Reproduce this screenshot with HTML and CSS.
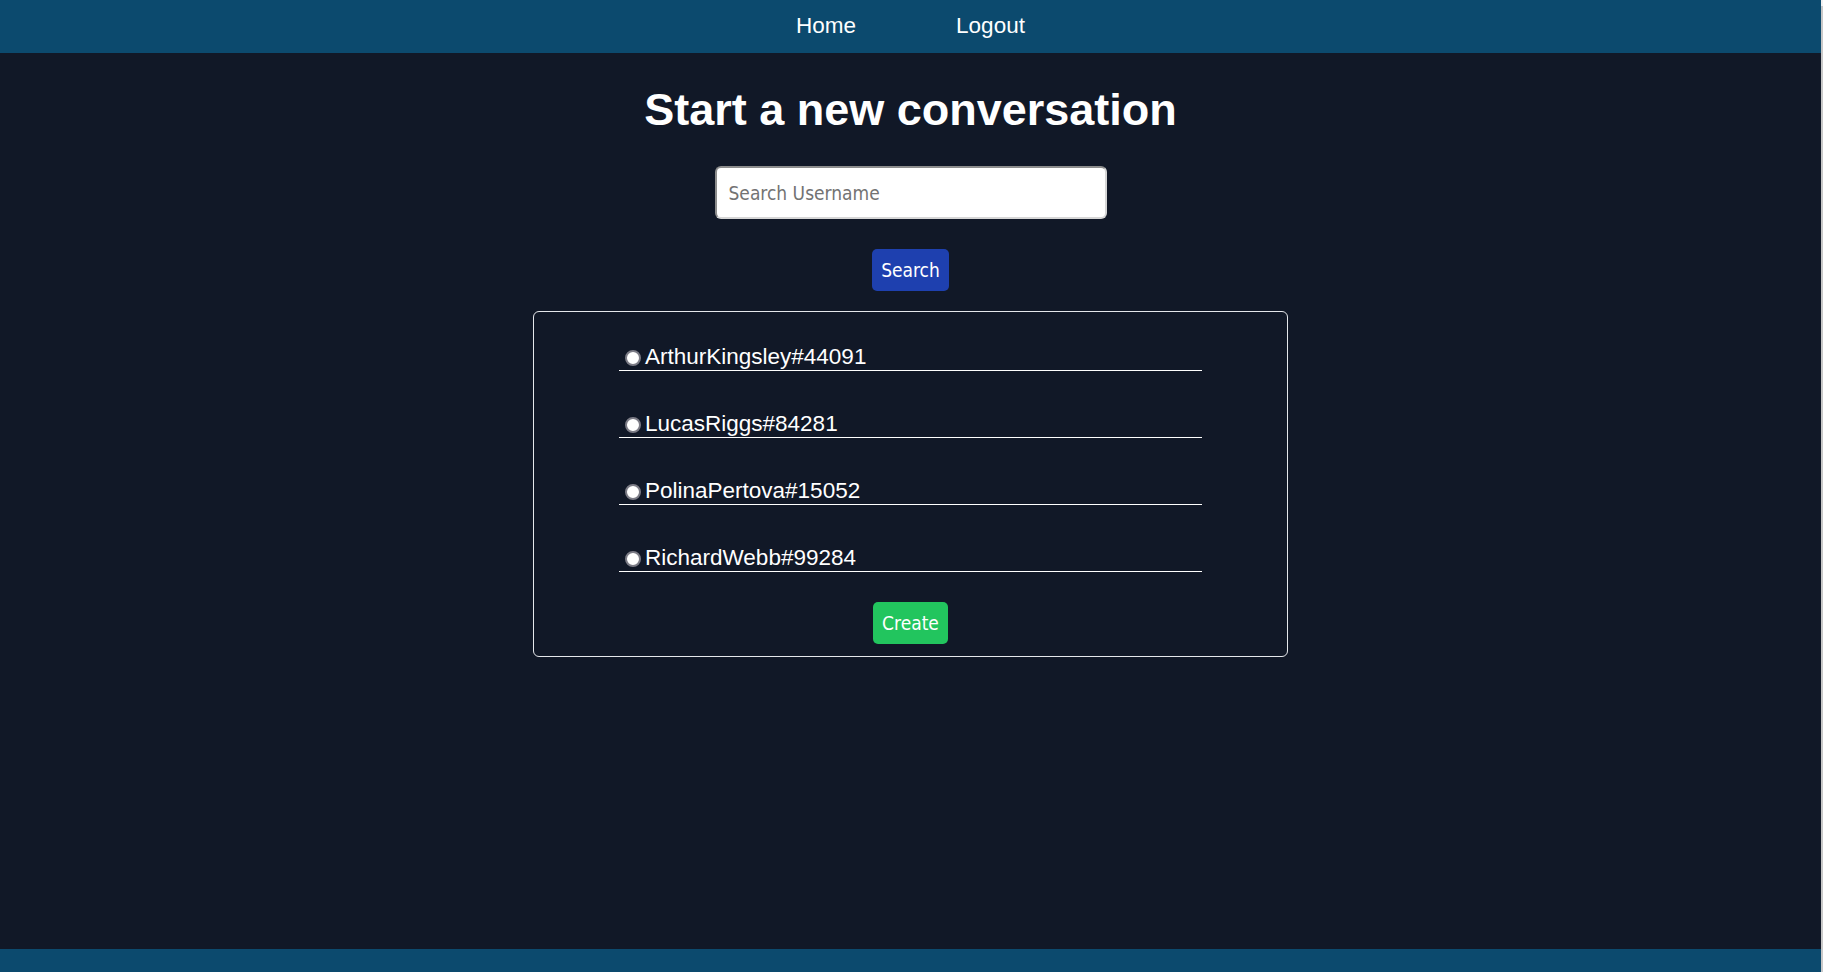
FILE: index.html
```html
<!DOCTYPE html>
<html lang="en">
<head>
<meta charset="utf-8">
<title>Start a new conversation</title>
<link rel="stylesheet" href="styles.css">
</head>
<body>
<div class="page">
  <header class="topbar">
    <nav class="nav">
      <a class="nav-link" href="#">Home</a>
      <a class="nav-link" href="#">Logout</a>
    </nav>
  </header>
  <main class="main">
    <h1 class="title">Start a new conversation</h1>
    <form class="search-form">
      <input class="search-input" type="text" placeholder="Search Username">
      <button class="btn btn-search" type="button">Search</button>
    </form>
    <form class="card">
      <label class="user-row"><input class="radio" type="radio" name="user">ArthurKingsley#44091</label>
      <label class="user-row"><input class="radio" type="radio" name="user">LucasRiggs#84281</label>
      <label class="user-row"><input class="radio" type="radio" name="user">PolinaPertova#15052</label>
      <label class="user-row"><input class="radio" type="radio" name="user">RichardWebb#99284</label>
      <button class="btn btn-create" type="button">Create</button>
    </form>
  </main>
  <footer class="footer"></footer>
</div>
<div class="scroll-strip"><div class="scroll-cap"></div></div>
</body>
</html>
```

FILE: styles.css
```css
* { box-sizing: border-box; }

html, body {
  margin: 0;
  height: 100%;
}

body {
  display: flex;
  background: #111827;
  color: #ffffff;
  font-family: "Liberation Sans", Arial, sans-serif;
}

.page {
  flex: 1;
  display: flex;
  flex-direction: column;
  min-height: 100vh;
}

.scroll-strip {
  width: 2px;
  background: #c9c9c9;
}

.scroll-cap {
  height: 6px;
  background: #f1f1f1;
}

.topbar {
  height: 53px;
  background: #0c4a6e;
  display: flex;
  align-items: center;
  justify-content: center;
  padding-bottom: 2px;
}

.nav {
  display: flex;
  gap: 100px;
}

.nav-link {
  color: #ffffff;
  text-decoration: none;
  font-size: 22.5px;
  line-height: 26px;
}

.main {
  flex: 1;
  display: flex;
  flex-direction: column;
  align-items: center;
  padding-top: 32px;
}

.title {
  margin: 0;
  font-size: 45px;
  line-height: 50px;
  font-weight: 700;
  text-align: center;
}

.search-form {
  display: flex;
  flex-direction: column;
  align-items: center;
  margin-top: 31px;
}

.search-input {
  width: 392px;
  height: 53px;
  border: 2px solid;
  border-color: #8d8d8d #d6d6d6 #d6d6d6 #8d8d8d;
  border-radius: 6px;
  background: #ffffff;
  padding: 0 12px;
  font-family: "DejaVu Sans Condensed", "DejaVu Sans", sans-serif;
  font-stretch: condensed;
  font-size: 19px;
  color: #111;
  outline: none;
}

.search-input::placeholder {
  color: #737373;
}

.btn {
  height: 42px;
  border: none;
  border-radius: 5px;
  color: #ffffff;
  font-family: "DejaVu Sans Condensed", "DejaVu Sans", sans-serif;
  font-stretch: condensed;
  font-size: 19px;
  padding: 0 8px;
  cursor: pointer;
}

.btn-search {
  margin-top: 30px;
  width: 77px;
  background: #1e40af;
}

.card {
  margin-top: 20px;
  width: 755px;
  border: 1px solid #e5e7eb;
  border-radius: 6px;
  padding: 32px 0 12px;
  display: flex;
  flex-direction: column;
  align-items: center;
  gap: 40px;
}

.user-row {
  display: block;
  width: 583px;
  font-size: 22.5px;
  line-height: 26px;
  border-bottom: 1px solid #ffffff;
}

.radio {
  appearance: none;
  -webkit-appearance: none;
  width: 16px;
  height: 16px;
  margin: 0 4px 0 6px;
  vertical-align: -2px;
  border-radius: 50%;
  border: 2px solid #7c7c86;
  background: #ffffff;
}

.user-row + .btn-create {
  margin-top: -10px;
}

.btn-create {
  width: 75px;
  background: #22c55e;
}

.footer {
  height: 23px;
  background: #0c4a6e;
}
```
